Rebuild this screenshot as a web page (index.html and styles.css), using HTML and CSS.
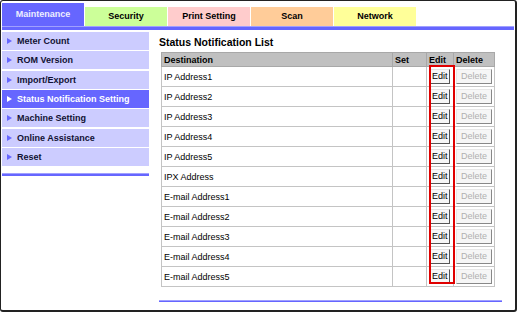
FILE: index.html
```html
<!DOCTYPE html>
<html>
<head>
    <meta charset="UTF-8">
    <title>Status Notification List</title>
    <link rel="stylesheet" href="styles.css">
</head>
<body>
<div class="screen">
    <div class="tabs">
        <div class="tab tab-maint active">Maintenance</div>
        <div class="tab tab-sec">Security</div>
        <div class="tab tab-print">Print Setting</div>
        <div class="tab tab-scan">Scan</div>
        <div class="tab tab-net">Network</div>
    </div>
    <div class="tab-rule"></div>

    <div class="content">
        <div class="side">
            <ul class="menu">
                <li>Meter Count</li>
                <li>ROM Version</li>
                <li>Import/Export</li>
                <li class="current">Status Notification Setting</li>
                <li>Machine Setting</li>
                <li>Online Assistance</li>
                <li>Reset</li>
            </ul>
            <div class="side-rule"></div>
        </div>

        <div class="main">
            <h1>Status Notification List</h1>
            <div class="list-wrap">
                <table class="list">
                    <tr>
                        <th class="c-dest">Destination</th>
                        <th class="c-set">Set</th>
                        <th class="c-edit">Edit</th>
                        <th class="c-del">Delete</th>
                    </tr>
                    <tr><td>IP Address1</td><td></td><td class="btn-cell"><span class="btn">Edit</span></td><td class="btn-cell"><span class="btn off">Delete</span></td></tr>
                    <tr><td>IP Address2</td><td></td><td class="btn-cell"><span class="btn">Edit</span></td><td class="btn-cell"><span class="btn off">Delete</span></td></tr>
                    <tr><td>IP Address3</td><td></td><td class="btn-cell"><span class="btn">Edit</span></td><td class="btn-cell"><span class="btn off">Delete</span></td></tr>
                    <tr><td>IP Address4</td><td></td><td class="btn-cell"><span class="btn">Edit</span></td><td class="btn-cell"><span class="btn off">Delete</span></td></tr>
                    <tr><td>IP Address5</td><td></td><td class="btn-cell"><span class="btn">Edit</span></td><td class="btn-cell"><span class="btn off">Delete</span></td></tr>
                    <tr><td>IPX Address</td><td></td><td class="btn-cell"><span class="btn">Edit</span></td><td class="btn-cell"><span class="btn off">Delete</span></td></tr>
                    <tr><td>E-mail Address1</td><td></td><td class="btn-cell"><span class="btn">Edit</span></td><td class="btn-cell"><span class="btn off">Delete</span></td></tr>
                    <tr><td>E-mail Address2</td><td></td><td class="btn-cell"><span class="btn">Edit</span></td><td class="btn-cell"><span class="btn off">Delete</span></td></tr>
                    <tr><td>E-mail Address3</td><td></td><td class="btn-cell"><span class="btn">Edit</span></td><td class="btn-cell"><span class="btn off">Delete</span></td></tr>
                    <tr><td>E-mail Address4</td><td></td><td class="btn-cell"><span class="btn">Edit</span></td><td class="btn-cell"><span class="btn off">Delete</span></td></tr>
                    <tr><td>E-mail Address5</td><td></td><td class="btn-cell"><span class="btn">Edit</span></td><td class="btn-cell"><span class="btn off">Delete</span></td></tr>
                </table>
                <div class="edit-mark"></div>
            </div>
            <div class="main-rule"></div>
        </div>
    </div>
</div>
</body>
</html>
```

FILE: styles.css
```css
html, body {
    margin: 0;
    padding: 0;
    background: #fff;
}

body {
    font-family: "Liberation Sans", Arial, sans-serif;
    font-size: 9px;
    color: #000;
}

.screen {
    box-sizing: border-box;
    width: 517px;
    height: 312px;
    border-style: solid;
    border-color: #222;
    border-width: 1px 2px 2px 1px;
    border-radius: 3px;
    padding: 0 0 0 1px;
    overflow: hidden;
}

/* tabs */
.tabs {
    display: flex;
    align-items: flex-end;
    gap: 1px;
    height: 25px;
}

.tab {
    width: 82px;
    height: 19px;
    line-height: 19px;
    text-align: center;
    font-weight: bold;
    font-size: 9px;
}

.tab.active {
    height: 23px;
    line-height: 23px;
    color: #eeeeff;
}

.tab-maint { background: #6666ff; }
.tab-sec { background: #ccff99; }
.tab-print { background: #ffcccc; }
.tab-scan { background: #ffcc99; }
.tab-net { background: #ffff99; }

.tab-rule {
    height: 3px;
    border-top: 1px solid #a0a0ff;
    background: #6666ff;
    margin-right: 1px;
}

.content {
    display: flex;
    margin-top: 2px;
}

/* side menu */
.side {
    width: 147px;
}

.menu {
    list-style: none;
    margin: 0;
    padding: 0;
    display: flex;
    flex-direction: column;
    gap: 1.33px;
}

.menu li {
    height: 18px;
    line-height: 18px;
    background: #ccccff;
    font-weight: bold;
    color: #111133;
    padding-left: 15px;
    position: relative;
}

.menu li::before {
    content: "";
    position: absolute;
    left: 5px;
    top: 6px;
    border-left: 5px solid #6666ff;
    border-top: 3px solid transparent;
    border-bottom: 3px solid transparent;
}

.menu li.current {
    background: #6666ff;
    color: #fff;
}

.menu li.current::before {
    border-left-color: #fff;
}

.side-rule {
    margin-top: 7px;
    height: 2px;
    border-top: 1px solid #a0a0ff;
    background: #6666ff;
}

/* main */
.main {
    margin-left: 3px;
    width: 350px;
}

.main h1 {
    font-size: 10.5px;
    line-height: 13px;
    font-weight: bold;
    margin: 4px 0 3px 7px;
}

.list-wrap {
    position: relative;
    margin-left: 9px;
    width: 334px;
}

.list {
    border-collapse: collapse;
    width: 334px;
    border: 1px solid #999;
}

.list th,
.list td {
    border: 1px solid #c4c4c4;
    padding: 0 2px;
    text-align: left;
    white-space: nowrap;
}

.list th {
    background: #c0c0c0;
    height: 13px;
    line-height: 12px;
    font-weight: bold;
    border-color: #a8a8a8;
}

.list td {
    height: 19px;
}

.c-dest { width: 227px; }
.c-set { width: 29px; }
.c-edit { width: 22px; }
.c-del { width: 35px; }

.btn-cell {
    padding: 0 2px;
}

.btn {
    display: inline-block;
    box-sizing: border-box;
    height: 15px;
    line-height: 12px;
    padding: 0 2px;
    background: #f6f6f6;
    border: 1px solid;
    border-color: #e4e4e4 #555 #555 #e4e4e4;
    font-size: 9px;
    color: #000;
    vertical-align: middle;
}

.btn.off {
    color: #b0b0b0;
    padding: 0 4px;
    border-color: #e8e8e8 #888 #888 #e8e8e8;
}

.edit-mark {
    position: absolute;
    left: 268px;
    top: 13px;
    width: 22px;
    height: 215px;
    border: 2px solid #e00000;
}

.main-rule {
    margin: 13px 0 0 7px;
    height: 0;
    border-top: 1px solid #a0a0ff;
    border-bottom: 1px solid #6666ff;
    width: 343px;
}
```
